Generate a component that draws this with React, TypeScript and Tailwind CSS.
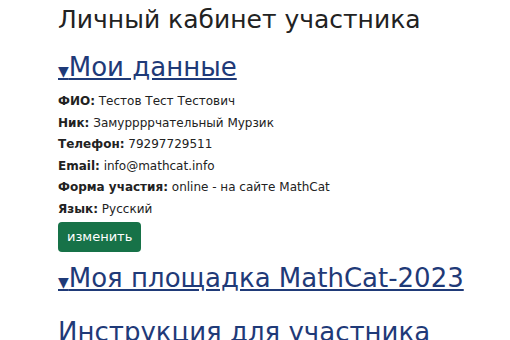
export default function App() {
  const rows: [string, string][] = [
    ["ФИО:", "Тестов Тест Тестович"],
    ["Ник:", "Замуррррчательный Мурзик"],
    ["Телефон:", "79297729511"],
    ["Email:", "info@mathcat.info"],
    ["Форма участия:", "online - на сайте MathCat"],
    ["Язык:", "Русский"],
  ];
  return (
    <div className="min-h-[340px] bg-white pl-[58px] text-[#222] font-['DejaVu_Sans',Verdana,sans-serif]">
      <h1 className="pt-[2px] text-[25px] leading-[36px]">Личный кабинет участника</h1>
      <a href="#" className="mt-[11px] block text-[26px] leading-[36px] text-[#1f3a78] underline">
        <span className="text-[14px]">▼</span>Мои данные
      </a>
      <div className="mt-[2px] text-[12px]">
        {rows.map(([k, v]) => (
          <div key={k} className="leading-[21.6px]">
            <b>{k}</b> {v}
          </div>
        ))}
      </div>
      <button className="mt-[1px] rounded-[4px] bg-[#177248] px-[9px] py-[6px] text-[13px] leading-[18px] font-medium text-white">
        изменить
      </button>
      <a href="#" className="mt-[8px] block text-[26px] leading-[36px] text-[#1f3a78] underline">
        <span className="text-[14px]">▼</span>Моя площадка MathCat-2023
      </a>
      <a href="#" className="mt-[14px] block text-[26px] leading-[36px] text-[#1f3a78] underline">
        Инструкция для участника
      </a>
    </div>
  );
}
